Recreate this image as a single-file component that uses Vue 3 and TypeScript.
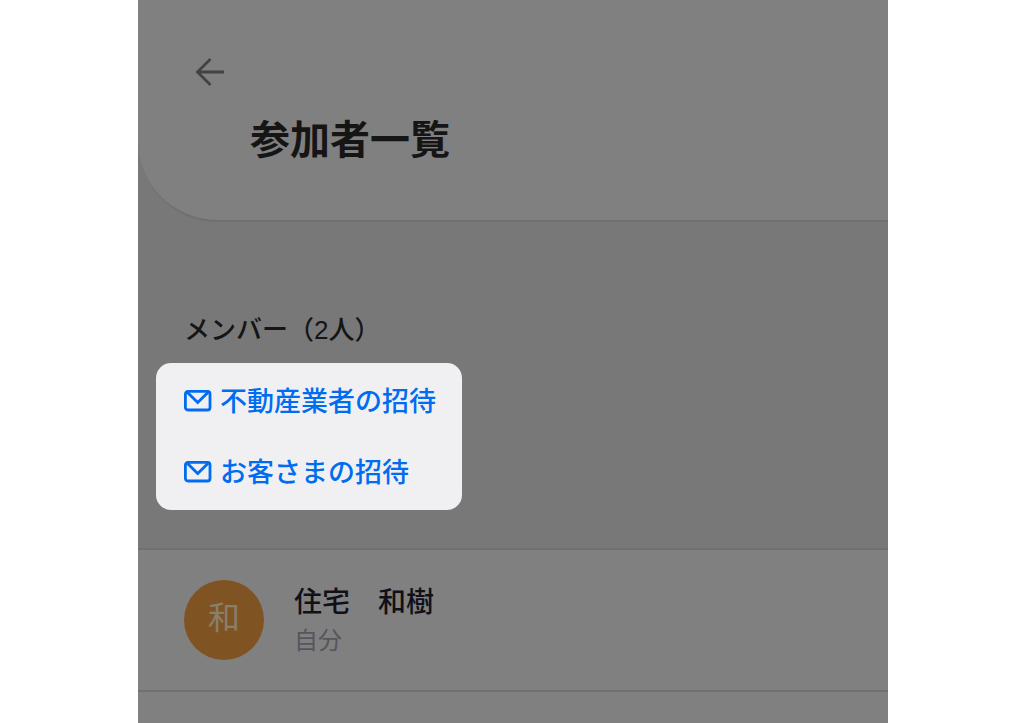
<script setup lang="ts">
interface Invite {
  id: string
  label: string
}

interface Member {
  id: number
  initial: string
  name: string
  note: string
}

const invites: Invite[] = [
  { id: 'agent', label: '不動産業者の招待' },
  { id: 'customer', label: 'お客さまの招待' },
]

const members: Member[] = [{ id: 1, initial: '和', name: '住宅　和樹', note: '自分' }]
</script>

<template>
  <div class="page">
    <div class="screen">
      <header class="header">
        <button class="back" type="button" aria-label="戻る">
          <svg width="32" height="32" viewBox="0 0 32 32" fill="none" aria-hidden="true">
            <path d="M30 16H3M16.5 3L3.5 16L16.5 29" stroke="#434343" stroke-width="2.8" />
          </svg>
        </button>
        <h1 class="title">参加者一覧</h1>
      </header>

      <main>
        <section class="group">
          <h2 class="count">メンバー（2人）</h2>
          <nav class="invites">
            <a v-for="item in invites" :key="item.id" class="invite" href="#">
              <svg width="28" height="22" viewBox="0 0 28 22" fill="none" aria-hidden="true">
                <rect x="1.4" y="1.4" width="24.6" height="18.6" rx="2.5" stroke="#006cf0" stroke-width="2.8" />
                <path d="M3 2L13.7 12.5L24.4 2" stroke="#006cf0" stroke-width="2.8" />
              </svg>
              <span>{{ item.label }}</span>
            </a>
          </nav>
        </section>

        <ul class="members">
          <li v-for="member in members" :key="member.id" class="member">
            <span class="avatar">{{ member.initial }}</span>
            <div>
              <p class="name">{{ member.name }}</p>
              <p class="note">{{ member.note }}</p>
            </div>
          </li>
        </ul>
      </main>
    </div>
  </div>
</template>

<style>
body {
  margin: 0;
  background: #fff;
}
</style>

<style scoped>
.page {
  box-sizing: border-box;
  padding: 0 141px 0 138px;
  font-family: 'Liberation Sans', 'Noto Sans CJK JP', sans-serif;
}

.screen {
  display: flex;
  flex-direction: column;
  min-height: 100vh;
  background: #787878;
}

.header {
  padding: 56px 56px 52px;
  background: #808080;
  border-bottom: 2px solid #707070;
  border-bottom-left-radius: 80px;
}

.back {
  display: block;
  width: 32px;
  height: 32px;
  padding: 0;
  border: 0;
  background: none;
  cursor: pointer;
}

.back svg {
  display: block;
}

.title {
  margin: 24px 0 0 56px;
  font-size: 40px;
  line-height: 56px;
  font-weight: 700;
  color: #151515;
}

main {
  display: flex;
  flex: 1;
  flex-direction: column;
}

.group {
  padding: 88px 18px 38px;
}

.count {
  margin: 0 28px 13px;
  font-size: 26px;
  line-height: 40px;
  font-weight: 500;
  color: #151515;
}

.invites {
  display: flex;
  flex-direction: column;
  gap: 31px;
  width: fit-content;
  padding: 19px 26px 17px 28px;
  border-radius: 15px;
  background: #f0f0f3;
}

.invite {
  display: flex;
  align-items: center;
  gap: 8px;
  font-size: 27px;
  line-height: 40px;
  font-weight: 500;
  color: #006cf0;
  text-decoration: none;
}

.invite svg {
  margin-bottom: 2px;
}

.members {
  flex: 1;
  margin: 0;
  padding: 0;
  list-style: none;
  background: #808080;
  border-top: 2px solid #707073;
}

.member {
  display: flex;
  align-items: center;
  gap: 30px;
  padding: 30px 46px;
  border-bottom: 2px solid #707073;
}

.avatar {
  display: flex;
  flex: none;
  box-sizing: border-box;
  justify-content: center;
  width: 80px;
  height: 80px;
  padding-top: 18px;
  border-radius: 50%;
  background: #805323;
  color: #86806c;
  font-size: 32px;
  line-height: 40px;
}

.name,
.note {
  margin: 0;
}

.name {
  padding-top: 2px;
  font-size: 28px;
  line-height: 40px;
  font-weight: 500;
  color: #101018;
}

.note {
  font-size: 24px;
  line-height: 36px;
  color: #55555d;
}
</style>
